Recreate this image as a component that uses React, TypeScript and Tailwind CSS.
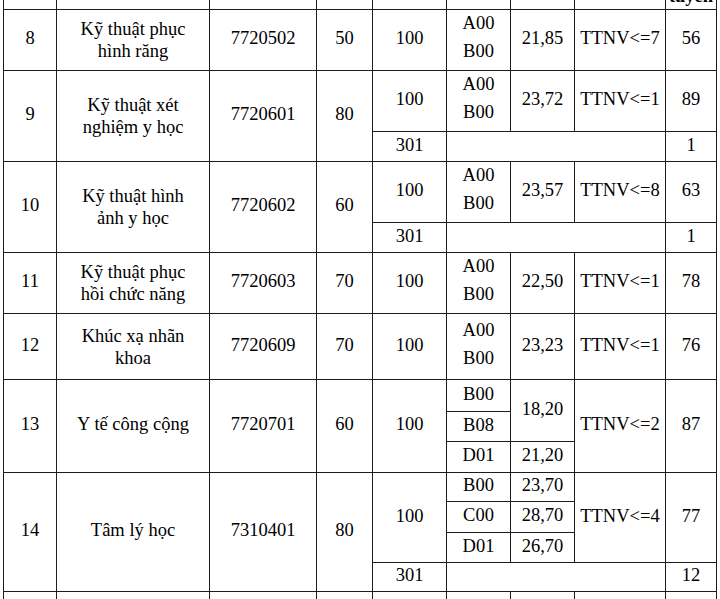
import type { ReactNode } from 'react';

const cell =
  "border-[1.5px] border-[#1c1c1c] px-0 pt-0 pb-[4px] text-center align-middle font-['Liberation_Serif','Times_New_Roman',serif] text-[18.5px] leading-[22px] text-black";

const Td = ({
  children,
  rowSpan,
  colSpan,
  className = '',
}: {
  children?: ReactNode;
  rowSpan?: number;
  colSpan?: number;
  className?: string;
}) => (
  <td rowSpan={rowSpan} colSpan={colSpan} className={`${cell} ${className}`}>
    {children}
  </td>
);

// two-line combo cell (A00 / B00)
const Combo = ({ a, b }: { a: string; b: string }) => (
  <div className="-mt-[2px] flex flex-col items-center leading-[28px]">
    <span>{a}</span>
    <span>{b}</span>
  </div>
);

const Name = ({ lines }: { lines: string[] }) => (
  <div className="mt-[4px] flex flex-col items-center leading-[22px]">
    {lines.map((l) => (
      <span key={l}>{l}</span>
    ))}
  </div>
);

const widths = [53, 153, 107, 56, 74, 64, 64, 91, 51];

export default function App() {
  return (
    <div className="h-[599px] w-[720px] overflow-hidden bg-white">
      <table className="-mt-[62px] ml-[3px] w-[713px] table-fixed border-collapse">
        <colgroup>
          {widths.map((w, i) => (
            <col key={i} style={{ width: w }} />
          ))}
        </colgroup>
        <tbody>
          {/* header (mostly off screen) */}
          <tr className="h-[71px]">
            <Td />
            <Td />
            <Td />
            <Td />
            <Td />
            <Td />
            <Td />
            <Td />
            <Td className="!pb-[2px] !align-bottom font-bold">Số trúng tuyển</Td>
          </tr>

          {/* 8 */}
          <tr className="h-[61px]">
            <Td>8</Td>
            <Td>
              <Name lines={['Kỹ thuật phục', 'hình răng']} />
            </Td>
            <Td>7720502</Td>
            <Td>50</Td>
            <Td>100</Td>
            <Td>
              <Combo a="A00" b="B00" />
            </Td>
            <Td>21,85</Td>
            <Td className="whitespace-nowrap">TTNV&lt;=7</Td>
            <Td>56</Td>
          </tr>

          {/* 9 */}
          <tr className="h-[61px]">
            <Td rowSpan={2}>9</Td>
            <Td rowSpan={2}>
              <Name lines={['Kỹ thuật xét', 'nghiệm y học']} />
            </Td>
            <Td rowSpan={2}>7720601</Td>
            <Td rowSpan={2}>80</Td>
            <Td>100</Td>
            <Td>
              <Combo a="A00" b="B00" />
            </Td>
            <Td>23,72</Td>
            <Td className="whitespace-nowrap">TTNV&lt;=1</Td>
            <Td>89</Td>
          </tr>
          <tr className="h-[30px]">
            <Td>301</Td>
            <Td colSpan={3} />
            <Td>1</Td>
          </tr>

          {/* 10 */}
          <tr className="h-[61px]">
            <Td rowSpan={2}>10</Td>
            <Td rowSpan={2}>
              <Name lines={['Kỹ thuật hình', 'ảnh y học']} />
            </Td>
            <Td rowSpan={2}>7720602</Td>
            <Td rowSpan={2}>60</Td>
            <Td>100</Td>
            <Td>
              <Combo a="A00" b="B00" />
            </Td>
            <Td>23,57</Td>
            <Td className="whitespace-nowrap">TTNV&lt;=8</Td>
            <Td>63</Td>
          </tr>
          <tr className="h-[30px]">
            <Td>301</Td>
            <Td colSpan={3} />
            <Td>1</Td>
          </tr>

          {/* 11 */}
          <tr className="h-[61px]">
            <Td>11</Td>
            <Td>
              <Name lines={['Kỹ thuật phục', 'hồi chức năng']} />
            </Td>
            <Td>7720603</Td>
            <Td>70</Td>
            <Td>100</Td>
            <Td>
              <Combo a="A00" b="B00" />
            </Td>
            <Td>22,50</Td>
            <Td className="whitespace-nowrap">TTNV&lt;=1</Td>
            <Td>78</Td>
          </tr>

          {/* 12 */}
          <tr className="h-[66px]">
            <Td>12</Td>
            <Td>
              <Name lines={['Khúc xạ nhãn', 'khoa']} />
            </Td>
            <Td>7720609</Td>
            <Td>70</Td>
            <Td>100</Td>
            <Td>
              <Combo a="A00" b="B00" />
            </Td>
            <Td>23,23</Td>
            <Td className="whitespace-nowrap">TTNV&lt;=1</Td>
            <Td>76</Td>
          </tr>

          {/* 13 */}
          <tr className="h-[32px]">
            <Td rowSpan={3}>13</Td>
            <Td rowSpan={3}>Y tế công cộng</Td>
            <Td rowSpan={3}>7720701</Td>
            <Td rowSpan={3}>60</Td>
            <Td rowSpan={3}>100</Td>
            <Td>B00</Td>
            <Td rowSpan={2}>18,20</Td>
            <Td rowSpan={3} className="whitespace-nowrap">
              TTNV&lt;=2
            </Td>
            <Td rowSpan={3}>87</Td>
          </tr>
          <tr className="h-[30px]">
            <Td>B08</Td>
          </tr>
          <tr className="h-[31px]">
            <Td>D01</Td>
            <Td>21,20</Td>
          </tr>

          {/* 14 */}
          <tr className="h-[29px]">
            <Td rowSpan={4}>14</Td>
            <Td rowSpan={4}>Tâm lý học</Td>
            <Td rowSpan={4}>7310401</Td>
            <Td rowSpan={4}>80</Td>
            <Td rowSpan={3}>100</Td>
            <Td>B00</Td>
            <Td>23,70</Td>
            <Td rowSpan={3} className="whitespace-nowrap">
              TTNV&lt;=4
            </Td>
            <Td rowSpan={3}>77</Td>
          </tr>
          <tr className="h-[31px]">
            <Td>C00</Td>
            <Td>28,70</Td>
          </tr>
          <tr className="h-[30px]">
            <Td>D01</Td>
            <Td>26,70</Td>
          </tr>
          <tr className="h-[29px]">
            <Td>301</Td>
            <Td colSpan={3} />
            <Td>12</Td>
          </tr>

          {/* next row, cut off */}
          <tr className="h-[40px]">
            {widths.map((_, i) => (
              <Td key={i} />
            ))}
          </tr>
        </tbody>
      </table>
    </div>
  );
}
